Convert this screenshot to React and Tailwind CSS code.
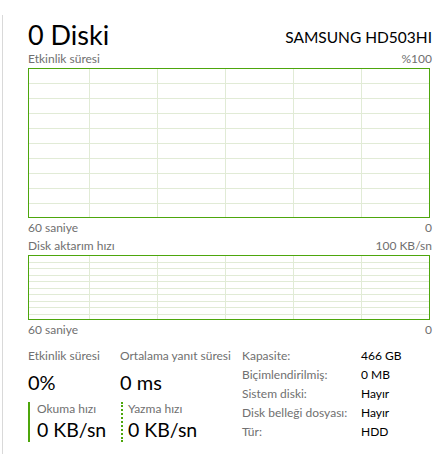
const GRID = "#e1ebd6";
const GREEN = "#4da60c";

function Chart({ height, rows }) {
  const w = 402;
  const cols = [61, 129, 197, 265, 333];
  const step = height / rows;
  return (
    <svg width={w} height={height} className="block">
      {Array.from({ length: rows - 1 }, (_, i) => (
        <line
          key={"h" + i}
          x1="0"
          x2={w}
          y1={Math.round(step * (i + 1)) + 0.5}
          y2={Math.round(step * (i + 1)) + 0.5}
          stroke={GRID}
        />
      ))}
      {cols.map((x) => (
        <line key={"v" + x} x1={x + 0.5} x2={x + 0.5} y1="0" y2={height} stroke={GRID} />
      ))}
      <rect x="0.5" y="0.5" width={w - 1} height={height - 1} fill="none" stroke={GREEN} />
    </svg>
  );
}

function Caption({ left, right }) {
  return (
    <div className="flex justify-between text-[12px] leading-[18px] text-[#707070]">
      <span>{left}</span>
      <span>{right}</span>
    </div>
  );
}

const props = [
  ["Kapasite:", "466 GB"],
  ["Biçimlendirilmiş:", "0 MB"],
  ["Sistem diski:", "Hayır"],
  ["Disk belleği dosyası:", "Hayır"],
  ["Tür:", "HDD"],
];

export default function App() {
  return (
    <div className="w-[446px] h-[454px] bg-white overflow-hidden font-['Lato',sans-serif]">
      <div className="ml-[2px] mt-[15px] h-[439px] border-l border-[#d9d9d9] pl-[25px] w-[430px]">
        {/* Header */}
        <div className="flex justify-between items-end h-[31px]">
          <h1 className="text-[27px] leading-[32px] text-black -mb-[5px]">0 Diski</h1>
          <span className="text-[15.5px] leading-[20px] text-black -mb-px">SAMSUNG HD503HI</span>
        </div>

        {/* Activity chart */}
        <div className="mt-[4px]">
          <Caption left="Etkinlik süresi" right="%100" />
        </div>
        <Chart height={150} rows={10} />
        <div className="mt-px">
          <Caption left="60 saniye" right="0" />
        </div>

        {/* Transfer chart */}
        <Caption left="Disk aktarım hızı" right="100 KB/sn" />
        <Chart height={65} rows={10} />
        <div className="mt-px">
          <Caption left="60 saniye" right="0" />
        </div>

        {/* Stats */}
        <div className="flex mt-[8px]">
          <div className="w-[92px]">
            <div className="text-[12px] leading-[18px] text-[#707070]">Etkinlik süresi</div>
            <div className="text-[20px] leading-[26px] text-black mt-[4px]">0%</div>
            <div className="mt-[7px] border-l-2 border-[#4da60c] pl-[7px] h-[40px]">
              <div className="text-[12px] leading-[14px] text-[#707070]">Okuma hızı</div>
              <div className="text-[19.5px] leading-[26px] text-black mt-px">0 KB/sn</div>
            </div>
          </div>
          <div className="w-[122px]">
            <div className="text-[12px] leading-[18px] text-[#707070] whitespace-nowrap">Ortalama yanıt süresi</div>
            <div className="text-[20px] leading-[26px] text-black mt-[4px]">0 ms</div>
            <div className="mt-[7px] ml-px border-l-2 border-dotted border-[#4da60c] pl-[5px] h-[40px]">
              <div className="text-[12px] leading-[14px] text-[#707070]">Yazma hızı</div>
              <div className="text-[19.5px] leading-[26px] text-black mt-px">0 KB/sn</div>
            </div>
          </div>
          <div className="grid grid-cols-[119px_auto] text-[12px] leading-[18px]">
            {props.map(([k, v]) => (
              <div key={k} className="contents">
                <span className="text-[#707070] whitespace-nowrap">{k}</span>
                <span className="text-black">{v}</span>
              </div>
            ))}
          </div>
        </div>
      </div>
    </div>
  );
}
